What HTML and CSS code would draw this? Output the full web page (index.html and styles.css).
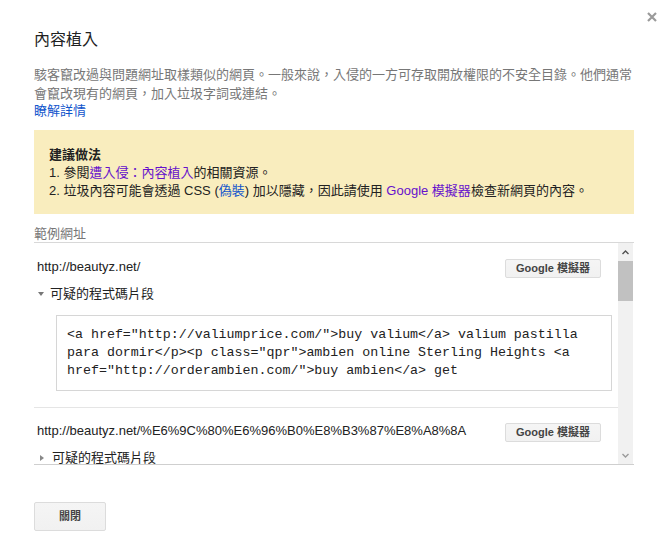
FILE: index.html
```html
<!DOCTYPE html>
<html lang="zh-Hant">
<head>
<meta charset="utf-8">
<title>內容植入</title>
<link rel="stylesheet" href="styles.css">
</head>
<body>
<div class="dialog">
  <button class="close-x" aria-label="關閉">
    <svg width="10" height="10" viewBox="0 0 10 10"><path d="M1 1 L9 9 M9 1 L1 9" stroke="#9a9a9a" stroke-width="2.2" fill="none"/></svg>
  </button>
  <h1 class="title">內容植入</h1>
  <p class="desc">駭客竄改過與問題網址取樣類似的網頁。一般來說，入侵的一方可存取開放權限的不安全目錄。他們通常會竄改現有的網頁，加入垃圾字詞或連結。</p>
  <a class="learn" href="#">瞭解詳情</a>

  <div class="advice">
    <div class="advice-title">建議做法</div>
    <div class="advice-line">1. 參閱<a class="visited" href="#">遭入侵：內容植入</a>的相關資源。</div>
    <div class="advice-line">2. 垃圾內容可能會透過 CSS (<a class="blue" href="#">偽裝</a>) 加以隱藏，因此請使用 <a class="visited" href="#">Google 模擬器</a>檢查新網頁的內容。</div>
  </div>

  <div class="section-label">範例網址</div>
  <div class="scrollbox">
    <div class="scroll-content">
      <div class="item">
        <div class="url-row">
          <span class="url">http://beautyz.net/</span>
          <button class="btn small">Google 模擬器</button>
        </div>
        <div class="toggle"><span class="tri-down"></span>可疑的程式碼片段</div>
        <div class="code">&lt;a href="http://valiumprice.com/"&gt;buy valium&lt;/a&gt; valium pastilla para dormir&lt;/p&gt;&lt;p class="qpr"&gt;ambien online Sterling Heights &lt;a href="http://orderambien.com/"&gt;buy ambien&lt;/a&gt; get</div>
      </div>
      <div class="item">
        <div class="url-row">
          <span class="url">http://beautyz.net/%E6%9C%80%E6%96%B0%E8%B3%87%E8%A8%8A</span>
          <button class="btn small">Google 模擬器</button>
        </div>
        <div class="toggle"><span class="tri-right"></span>可疑的程式碼片段</div>
      </div>
    </div>
    <div class="scrollbar">
      <div class="sb-btn">
        <svg width="7" height="5" viewBox="0 0 7 5"><path d="M0.5 4 L3.5 1 L6.5 4" stroke="#505050" stroke-width="1.4" fill="none"/></svg>
      </div>
      <div class="sb-thumb"></div>
      <div class="sb-track"></div>
      <div class="sb-btn">
        <svg width="7" height="5" viewBox="0 0 7 5"><path d="M0.5 1 L3.5 4 L6.5 1" stroke="#9a9a9a" stroke-width="1.4" fill="none"/></svg>
      </div>
    </div>
  </div>

  <div class="footer">
    <button class="btn large">關閉</button>
  </div>
</div>
</body>
</html>
```

FILE: styles.css
```css
* { box-sizing: border-box; }

html, body {
  margin: 0;
  padding: 0;
  background: #fff;
}

body {
  font-family: "Liberation Sans", "Noto Sans CJK TC", sans-serif;
  font-size: 13px;
  color: #222;
}

.dialog {
  position: relative;
  width: 671px;
  padding: 30px 37px 0 34px;
}

.close-x {
  position: absolute;
  top: 12px;
  right: 14px;
  width: 10px;
  height: 10px;
  padding: 0;
  border: 0;
  background: none;
  display: flex;
}

.title {
  margin: 0;
  font-size: 16px;
  font-weight: normal;
  line-height: 20px;
  color: #222;
}

.desc {
  margin: 15px 0 0;
  line-height: 19px;
  color: #777;
}

.learn {
  display: block;
  line-height: 16px;
  color: #15c;
  text-decoration: none;
}

.advice {
  margin-top: 11px;
  background: #f9edbe;
  padding: 16px 15px 14px;
  line-height: 18px;
}

.advice-title {
  font-weight: bold;
}

.advice a { text-decoration: none; }
.visited { color: #61c; }
.blue { color: #15c; }

.section-label {
  margin-top: 12px;
  line-height: 16px;
  color: #777;
  border-bottom: 1px solid #d8d8d8;
}

.scrollbox {
  display: flex;
  height: 222px;
  border-bottom: 1px solid #cfcfcf;
}

.scroll-content {
  flex: 1;
  overflow: hidden;
  padding-top: 1px;
}

.item {
  padding: 15px 0 16px;
  border-bottom: 1px solid #e5e5e5;
}

.url-row {
  display: flex;
  justify-content: space-between;
  align-items: flex-start;
  padding: 0 17px 0 3px;
}

.url {
  line-height: 15px;
}

.btn {
  font-family: "Liberation Sans", "Noto Sans CJK TC", sans-serif;
  font-weight: bold;
  color: #444;
  background: linear-gradient(#f5f5f5, #f1f1f1);
  border: 1px solid #dcdcdc;
  border-radius: 2px;
  padding: 0;
  text-align: center;
}

.btn.small {
  width: 96px;
  height: 19px;
  font-size: 11px;
  line-height: 17px;
}

.btn.large {
  width: 72px;
  height: 29px;
  font-size: 11px;
  line-height: 27px;
}

.toggle {
  display: flex;
  align-items: center;
  margin-top: 7px;
  padding-left: 4px;
  line-height: 18px;
  color: #222;
}

.tri-down {
  width: 0;
  height: 0;
  border-left: 3.5px solid transparent;
  border-right: 3.5px solid transparent;
  border-top: 4px solid #777;
  margin-right: 6px;
}

.tri-right {
  width: 0;
  height: 0;
  border-top: 3.5px solid transparent;
  border-bottom: 3.5px solid transparent;
  border-left: 4px solid #888;
  margin: 0 8px 0 2px;
}

.code {
  margin: 12px 6px 0 22px;
  border: 1px solid #d6d6d6;
  padding: 10px 10px 10px 10px;
  font-family: "Liberation Mono", monospace;
  font-size: 13.3px;
  line-height: 18px;
  color: #222;
}

.scrollbar {
  width: 15px;
  display: flex;
  flex-direction: column;
  background: #f1f1f1;
  margin-right: 1px;
}

.sb-btn {
  height: 18px;
  display: flex;
  align-items: center;
  justify-content: center;
}

.sb-thumb {
  height: 40px;
  background: #c1c1c1;
}

.sb-track {
  flex: 1;
}

.footer {
  padding-top: 37px;
}
```
